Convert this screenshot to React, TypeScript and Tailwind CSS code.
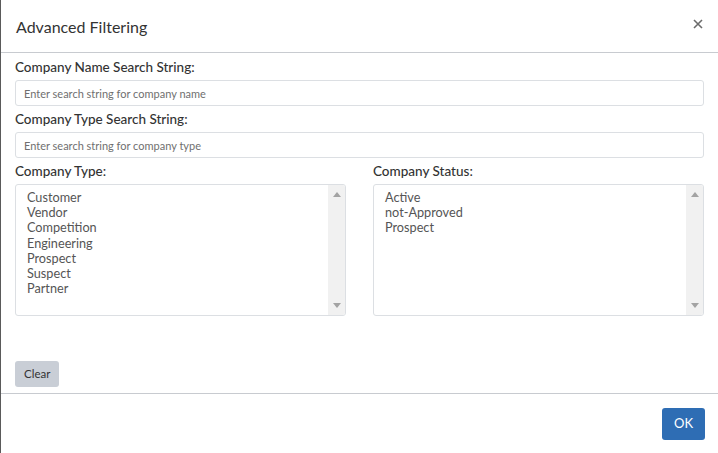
import React from "react";

const typeItems = ["Customer", "Vendor", "Competition", "Engineering", "Prospect", "Suspect", "Partner"];
const statusItems = ["Active", "not-Approved", "Prospect"];

function ListBox({ items }: { items: string[] }) {
  return (
    <div className="flex h-[132px] rounded-[3px] border border-[#dcdfe3] bg-white overflow-hidden">
      <div className="flex-1 pt-[5px] pl-[11px] text-[12.7px] leading-[15.2px] text-[#555]">
        {items.map((it) => (
          <div key={it}>{it}</div>
        ))}
      </div>
      <div className="w-[17px] bg-[#f1f1f1] flex flex-col items-center justify-between py-[7px]">
        <svg width="8" height="5" viewBox="0 0 8 5">
          <polygon points="4,0 8,5 0,5" fill="#a3a3a3" />
        </svg>
        <svg width="8" height="5" viewBox="0 0 8 5">
          <polygon points="0,0 8,0 4,5" fill="#a3a3a3" />
        </svg>
      </div>
    </div>
  );
}

function Label({ children }: { children: React.ReactNode }) {
  return <div className="h-[17px] leading-[17px] text-[13.5px] font-medium text-[#333] mb-[4px] whitespace-nowrap">{children}</div>;
}

function Input({ placeholder }: { placeholder: string }) {
  return (
    <input
      placeholder={placeholder}
      className="block w-full h-[26px] rounded-[3px] border border-[#dcdfe3] px-[8px] text-[11px] text-[#333] placeholder:text-[#6f6f6f] outline-none mb-[5px]"
      style={{ fontFamily: "Lato, 'Open Sans', sans-serif" }}
    />
  );
}

export default function App() {
  return (
    <div
      className="w-[718px] h-[453px] bg-white border-l border-[#5a5a5a] flex flex-col overflow-hidden"
      style={{ fontFamily: "Lato, 'Open Sans', sans-serif" }}
    >
      <div className="h-[53px] flex items-center justify-between pl-[15px] pr-[15px] border-b border-[#c8cbd0] shrink-0">
        <div className="text-[16px] text-[#333] pt-[1px]">Advanced Filtering</div>
        <svg width="10" height="10" viewBox="0 0 10 10" className="mb-[4px]">
          <path d="M1 1L9 9M9 1L1 9" stroke="#6b6b6b" strokeWidth="1.6" />
        </svg>
      </div>
      <div className="px-[14px] pt-[6px] flex flex-col">
        <Label>Company Name Search String:</Label>
        <Input placeholder="Enter search string for company name" />
        <Label>Company Type Search String:</Label>
        <Input placeholder="Enter search string for company type" />
        <div className="grid grid-cols-2 gap-[27px]">
          <div>
            <Label>Company Type:</Label>
            <ListBox items={typeItems} />
          </div>
          <div>
            <Label>Company Status:</Label>
            <ListBox items={statusItems} />
          </div>
        </div>
        <div className="pt-[44px] pb-[6px]">
          <button className="h-[26px] px-[9px] rounded-[3px] bg-[#c9ced6] text-[11.5px] text-[#333]">Clear</button>
        </div>
      </div>
      <div className="border-t border-[#c8cbd0] flex justify-end pt-[14px] pr-[13px]">
        <button className="h-[32px] w-[43px] rounded-[3px] bg-[#2e6db4] text-white text-[13px]">OK</button>
      </div>
    </div>
  );
}
